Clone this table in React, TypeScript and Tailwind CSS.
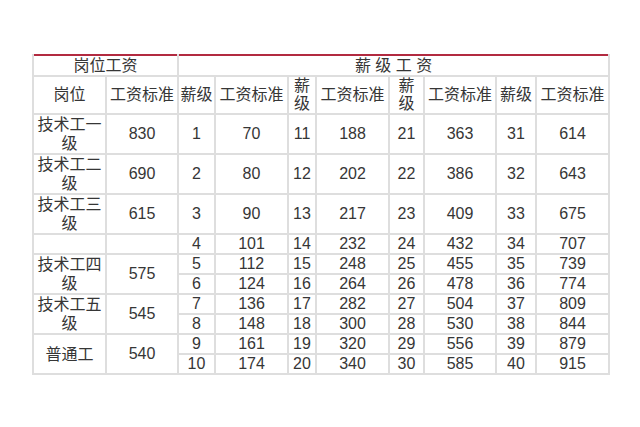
const rows: [string, string, string, string, string, string, string, string][] = [
  ["1", "70", "11", "188", "21", "363", "31", "614"],
  ["2", "80", "12", "202", "22", "386", "32", "643"],
  ["3", "90", "13", "217", "23", "409", "33", "675"],
  ["4", "101", "14", "232", "24", "432", "34", "707"],
  ["5", "112", "15", "248", "25", "455", "35", "739"],
  ["6", "124", "16", "264", "26", "478", "36", "774"],
  ["7", "136", "17", "282", "27", "504", "37", "809"],
  ["8", "148", "18", "300", "28", "530", "38", "844"],
  ["9", "161", "19", "320", "29", "556", "39", "879"],
  ["10", "174", "20", "340", "30", "585", "40", "915"],
];

// 岗位 cell for each row, null = covered by a rowspan above
const posts: ({ name: string; pay: string; span: number } | null)[] = [
  { name: "技术工一级", pay: "830", span: 1 },
  { name: "技术工二级", pay: "690", span: 1 },
  { name: "技术工三级", pay: "615", span: 1 },
  { name: "", pay: "", span: 1 },
  { name: "技术工四级", pay: "575", span: 2 },
  null,
  { name: "技术工五级", pay: "545", span: 2 },
  null,
  { name: "普通工", pay: "540", span: 2 },
  null,
];

const td = "border-2 border-[#dedede] text-center align-middle p-0";

export default function App() {
  return (
    <div className="min-h-screen bg-white pt-[54px] pl-[32px] text-[#363636] font-['Liberation_Sans','Noto_Sans_CJK_SC',sans-serif] text-[16px] leading-[18px]">
      <table className="table-fixed border-collapse border-t-2 border-t-[#b22a40] w-[576px]">
        <colgroup>
          <col className="w-[73px]" />
          <col className="w-[72px]" />
          <col className="w-[37px]" />
          <col className="w-[73px]" />
          <col className="w-[28px]" />
          <col className="w-[73px]" />
          <col className="w-[35px]" />
          <col className="w-[72px]" />
          <col className="w-[40px]" />
          <col className="w-[73px]" />
        </colgroup>
        <tbody>
          <tr className="h-[21px]">
            <td colSpan={2} className={`${td} border-t-0`}>岗位工资</td>
            <td colSpan={8} className={`${td} border-t-0`}>薪 级 工 资</td>
          </tr>
          <tr className="h-[38px]">
            <td className={td}>岗位</td>
            <td className={td}>工资标准</td>
            <td className={td}>薪级</td>
            <td className={td}>工资标准</td>
            <td className={td}>薪<br />级</td>
            <td className={td}>工资标准</td>
            <td className={td}>薪<br />级</td>
            <td className={td}>工资标准</td>
            <td className={td}>薪级</td>
            <td className={td}>工资标准</td>
          </tr>
          {rows.map((r, i) => {
            const p = posts[i];
            return (
              <tr key={i} className={i < 3 ? "h-[39px]" : "h-[20px]"}>
                {p && (
                  <>
                    <td rowSpan={p.span} className={`${td} px-[2px] leading-[19px]`}>{p.name}</td>
                    <td rowSpan={p.span} className={td}>{p.pay}</td>
                  </>
                )}
                {r.map((v, j) => (
                  <td key={j} className={td}>{v}</td>
                ))}
              </tr>
            );
          })}
        </tbody>
      </table>
    </div>
  );
}
